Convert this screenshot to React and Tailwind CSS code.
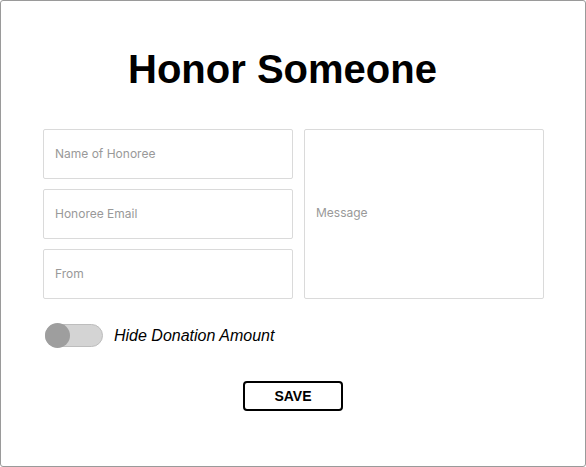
import { useState } from 'react';

export default function App() {
  const [hideAmount, setHideAmount] = useState(false);

  return (
    <div className="w-[586px] h-[467px] bg-white">
      <div className="h-full border border-[#9a9a9a] rounded-[3px] flex flex-col">
        {/* Title */}
        <h1 className="mt-[45px] pr-[21px] text-center text-[40px] leading-[46px] font-bold text-black font-['Liberation_Sans',Arial,sans-serif]">
          Honor Someone
        </h1>

        {/* Fields */}
        <div className="mt-[37px] ml-[42px] flex gap-[11px] font-['Inter',sans-serif]">
          <div className="w-[250px] flex flex-col gap-[10px]">
            <input
              type="text"
              placeholder="Name of Honoree"
              className="h-[50px] px-[11px] pb-[2px] text-[12px] border border-[#dadada] rounded-[2px] placeholder:text-[#999] focus:outline-none"
            />
            <input
              type="email"
              placeholder="Honoree Email"
              className="h-[50px] px-[11px] pb-[2px] text-[12px] border border-[#dadada] rounded-[2px] placeholder:text-[#999] focus:outline-none"
            />
            <input
              type="text"
              placeholder="From"
              className="h-[50px] px-[11px] pb-[2px] text-[12px] border border-[#dadada] rounded-[2px] placeholder:text-[#999] focus:outline-none"
            />
          </div>
          <div className="w-[240px] h-[170px] border border-[#dadada] rounded-[2px] flex items-center px-[11px] pb-[2px]">
            <input
              type="text"
              placeholder="Message"
              className="w-full text-[12px] placeholder:text-[#999] focus:outline-none"
            />
          </div>
        </div>

        {/* Toggle */}
        <div className="mt-[24px] ml-[44px] flex items-center gap-[11px]">
          <button
            type="button"
            onClick={() => setHideAmount(!hideAmount)}
            className={`relative w-[58px] h-[23px] rounded-full border border-[#bdbdbd] bg-[#d4d4d4] flex items-center ${
              hideAmount ? 'justify-end' : 'justify-start'
            }`}
          >
            <span className="w-[25px] h-[25px] -ml-px rounded-full bg-[#9e9e9e]" />
          </button>
          <span className="translate-y-px text-[16px] italic text-black font-['Liberation_Sans',Arial,sans-serif]">
            Hide Donation Amount
          </span>
        </div>

        {/* Save */}
        <div className="mt-[34px] flex justify-center">
          <button
            type="button"
            className="w-[100px] h-[30px] border-2 border-black rounded-[4px] text-[14px] font-bold text-black font-['Liberation_Sans',Arial,sans-serif]"
          >
            SAVE
          </button>
        </div>
      </div>
    </div>
  );
}
